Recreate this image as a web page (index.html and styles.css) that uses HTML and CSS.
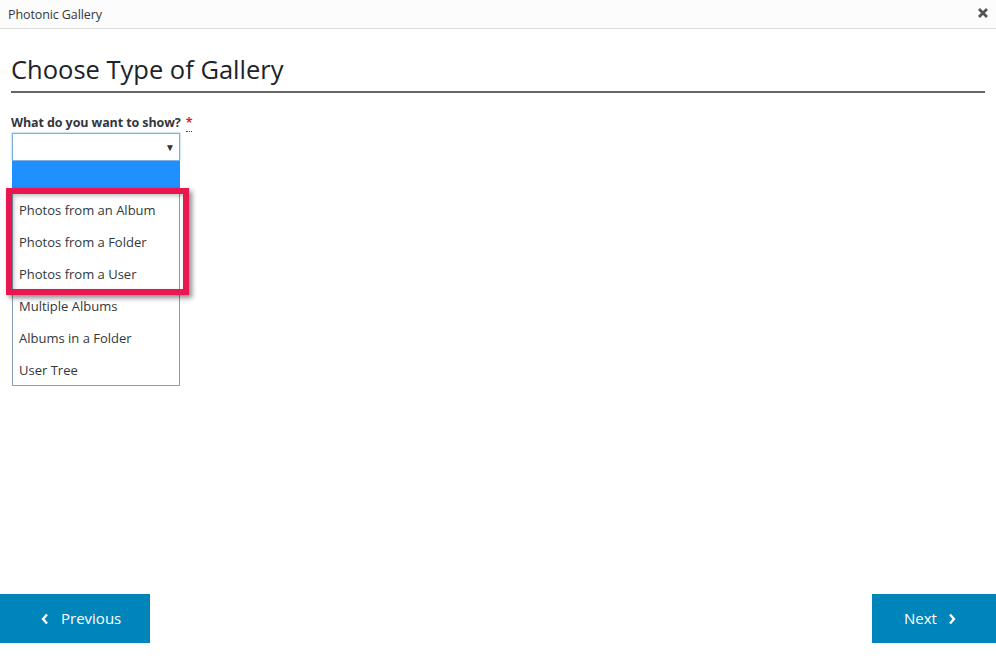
FILE: index.html
```html
<!DOCTYPE html>
<html>
<head>
<meta charset="utf-8">
<title>Photonic Gallery</title>
<link rel="stylesheet" href="styles.css">
</head>
<body>
<header class="titlebar">
  <span class="title">Photonic Gallery</span>
  <svg class="close" width="12" height="12" viewBox="0 0 12 12"><path d="M2 2L10 10M10 2L2 10" stroke="#555" stroke-width="2.8" stroke-linecap="butt"/></svg>
</header>
<main class="content">
  <h1 class="heading">Choose Type of Gallery</h1>
  <div class="field">
    <label class="label">What do you want to show? <abbr class="req">*</abbr></label>
    <div class="select-wrap">
      <div class="select"><span class="arrow">▼</span></div>
      <ul class="options">
        <li class="opt selected"></li>
        <li class="opt">Photos from an Album</li>
        <li class="opt">Photos from a Folder</li>
        <li class="opt">Photos from a User</li>
        <li class="opt">Multiple Albums</li>
        <li class="opt">Albums in a Folder</li>
        <li class="opt">User Tree</li>
      </ul>
      <div class="highlight"></div>
    </div>
  </div>
</main>
<footer class="footer">
  <button class="btn prev"><svg width="8" height="12" viewBox="0 0 8 12"><path d="M6 1.5L2 6L6 10.5" fill="none" stroke="#fff" stroke-width="2.4"/></svg><span>Previous</span></button>
  <button class="btn next"><span>Next</span><svg width="8" height="12" viewBox="0 0 8 12"><path d="M2 1.5L6 6L2 10.5" fill="none" stroke="#fff" stroke-width="2.4"/></svg></button>
</footer>
</body>
</html>
```
FILE: styles.css
```css
* { box-sizing: border-box; }
html, body { height: 100%; }
body {
  margin: 0;
  font-family: "Open Sans", "Noto Sans", sans-serif;
  color: #23282d;
  background: #fff;
  display: flex;
  flex-direction: column;
}
.titlebar {
  height: 29px;
  background: #fcfcfc;
  border-bottom: 1px solid #ddd;
  display: flex;
  align-items: center;
  justify-content: space-between;
  padding: 0 7px 0 8px;
}
.title {
  font-size: 12.5px;
  color: #32373c;
  letter-spacing: -0.1px;
}
.close { display: block; margin-top: -3px; }
.content {
  padding: 0 11px;
}
.heading {
  margin: 22px 0 0;
  font-size: 25.5px;
  font-weight: 500;
  line-height: 36px;
  padding-bottom: 4px;
  border-bottom: 2px solid #666;
  letter-spacing: 0;
  color: #1d2327;
}
.field { margin-top: 22px; }
.label {
  display: block;
  font-size: 12.5px;
  font-weight: 700;
  line-height: 16px;
  color: #32373c;
  letter-spacing: -0.1px;
}
.req {
  color: #e01f1f;
  text-decoration: none;
  border-bottom: 1px dotted #444;
  margin-left: 2px;
}
.select-wrap {
  position: relative;
  width: 168px;
  margin-top: 2px;
  margin-left: 1px;
}
.select {
  height: 28px;
  border: 1px solid #7eaee0;
  box-shadow: 0 0 2px rgba(30,140,190,0.6);
  background: #fff;
  display: flex;
  align-items: center;
  justify-content: flex-end;
  padding-right: 4px;
}
.arrow { font-size: 10px; color: #333; }
.options {
  position: absolute;
  top: 28px;
  left: 0;
  width: 168px;
  margin: 0;
  padding: 0;
  list-style: none;
  border: 1px solid #7f9db9;
  border-top: none;
  background: #fff;
}
.opt {
  height: 32px;
  line-height: 34px;
  padding-left: 6px;
  font-size: 13px;
  color: #32373c;
}
.opt.selected {
  background: #1e90ff;
  margin: 0 -1px;
}
.highlight {
  position: absolute;
  left: -6px;
  top: 55px;
  width: 183px;
  height: 107px;
  border: 6px solid #e9164f;
  box-shadow: 3px 3px 5px rgba(0,0,0,0.45), inset 2px 2px 4px rgba(0,0,0,0.25);
}
.footer {
  margin-top: auto;
  display: flex;
  justify-content: space-between;
  padding-bottom: 13px;
}
.btn {
  height: 49px;
  background: #0085ba;
  border: none;
  color: #fff;
  font-family: "Open Sans", "Noto Sans", sans-serif;
  font-size: 15px;
  display: flex;
  align-items: center;
  gap: 12px;
  padding: 0;
}
.prev { width: 150px; padding-left: 41px; }
.next { width: 124px; padding-left: 32px; gap: 11px; }
.btn span { line-height: 1; }
```
